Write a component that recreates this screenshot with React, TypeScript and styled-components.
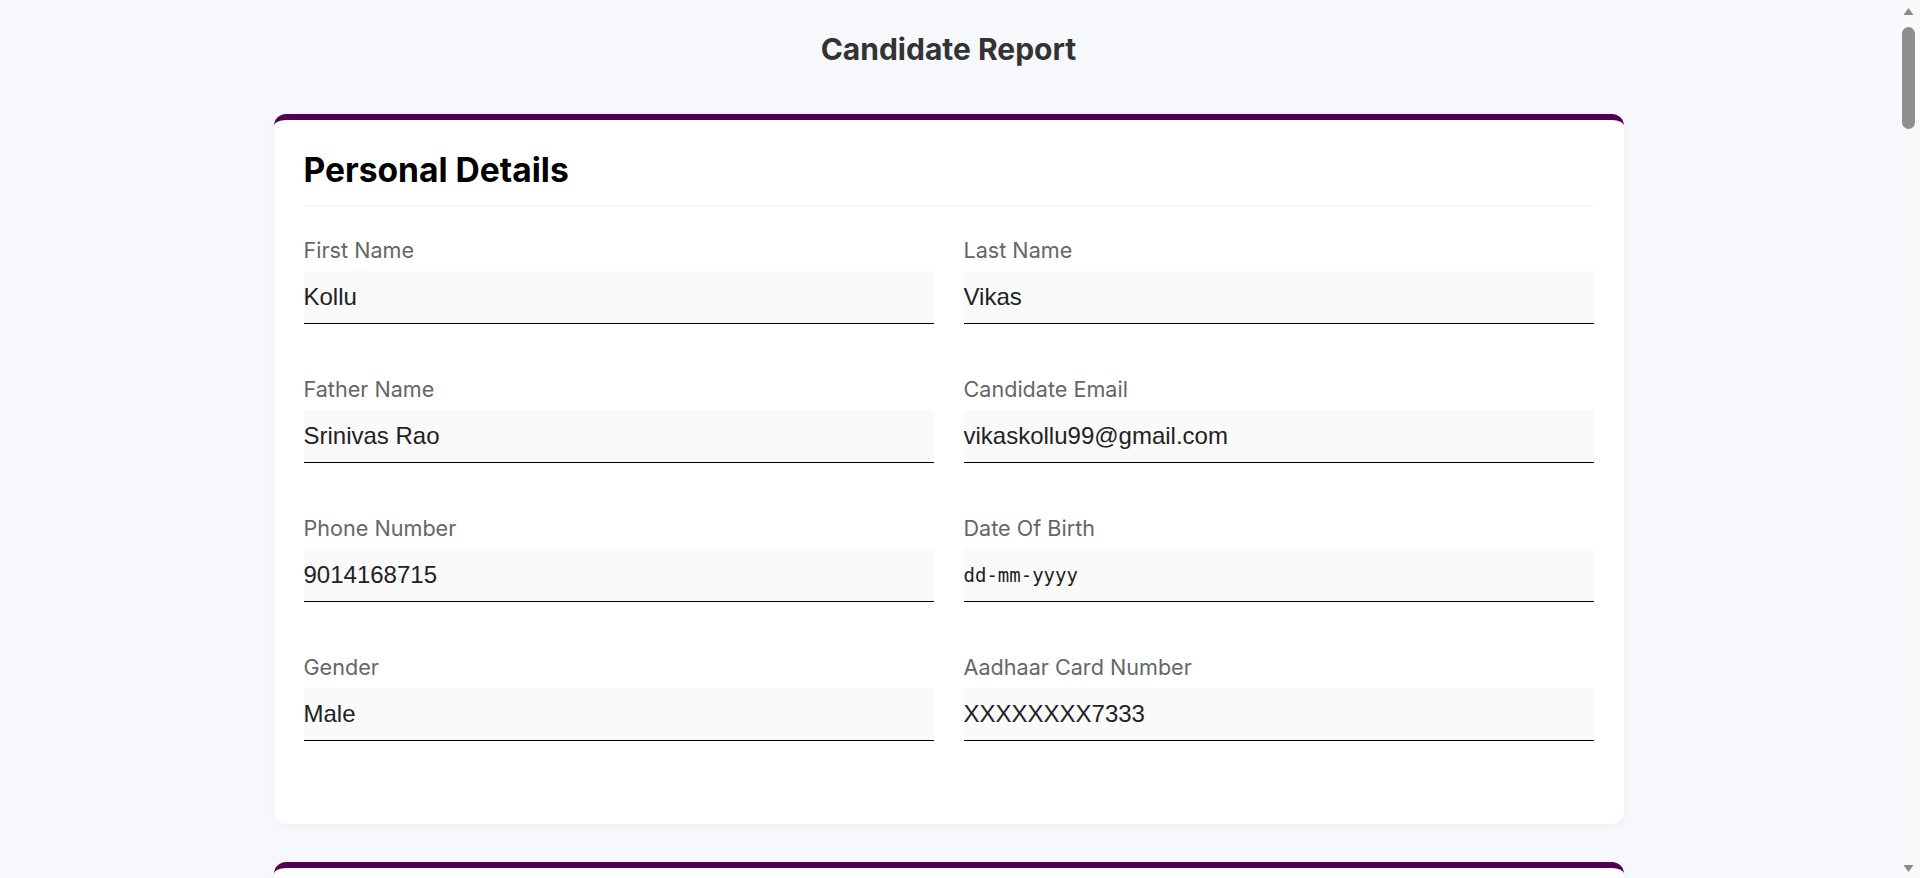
import React from "react";
import styled, { createGlobalStyle } from "styled-components";

const GlobalStyle = createGlobalStyle`
  * { box-sizing: border-box; }
  html, body { margin: 0; padding: 0; }
  body {
    background: #f7f8fc;
    font-family: Inter, "Noto Sans", sans-serif;
    color: #222;
  }
`;

const Page = styled.main`
  margin-right: 23px;
  padding: 31px 0 40px;
`;

const Title = styled.h1`
  margin: 0 0 47px;
  text-align: center;
  font-family: Inter, sans-serif;
  font-size: 30px;
  font-weight: 700;
  line-height: 1.21;
  color: #333;
`;

const Container = styled.div`
  max-width: 1350px;
  margin: 0 auto;
`;

const Card = styled.section`
  background: #fff;
  border-top: 6px solid #520050;
  border-radius: 12px;
  padding: 30px;
  margin-bottom: 38px;
  box-shadow: 0 2px 8px rgba(0, 0, 0, 0.04);
`;

const SectionTitle = styled.h2`
  margin: 0 0 32px;
  padding-bottom: 14px;
  border-bottom: 1px solid #eee;
  font-family: Inter, sans-serif;
  font-size: 33.6px;
  font-weight: 700;
  line-height: 1.21;
  color: #000;
`;

const Grid = styled.div`
  display: grid;
  grid-template-columns: 1fr 1fr;
  column-gap: 30px;
`;

const Field = styled.div`
  display: flex;
  flex-direction: column;
  margin-bottom: 53px;
`;

const Label = styled.label`
  display: block;
  font-family: Inter, sans-serif;
  font-size: 21.6px;
  line-height: 24px;
  color: #666;
  margin-bottom: 9px;
`;

const Value = styled.input<{ $mono?: boolean }>`
  display: block;
  width: 100%;
  margin: 0;
  padding: 12px 0;
  border: none;
  border-bottom: 1px solid #000;
  border-radius: 0;
  outline: none;
  background: #fafafa;
  font-family: ${(p) =>
    p.$mono ? '"DejaVu Sans Mono", monospace' : '"Liberation Sans", Arial, sans-serif'};
  font-size: ${(p) => (p.$mono ? "19px" : "24px")};
  line-height: 28px;
  height: 53px;
  color: #222;
`;

const ScrollTrack = styled.aside`
  position: fixed;
  top: 0;
  right: 0;
  bottom: 0;
  width: 23px;
  background: #fafafa;
  display: flex;
  flex-direction: column;
  align-items: center;
  padding: 7px 0 5px;
`;

const Thumb = styled.div`
  margin-top: 10px;
  width: 13px;
  height: 102px;
  border-radius: 7px;
  background: #8f8f8f;
`;

const ArrowBox = styled.svg<{ $down?: boolean }>`
  display: block;
  flex: none;
  margin-top: ${(p) => (p.$down ? "auto" : "0")};
`;

function Arrow({ down }: { down?: boolean }) {
  return (
    <ArrowBox $down={down} width="13" height="10" viewBox="0 0 13 10">
      <polygon
        points={down ? "1.5,2 11.5,2 6.5,9" : "1.5,8 11.5,8 6.5,1"}
        fill="#8a8a8a"
      />
    </ArrowBox>
  );
}

type FieldDef = { label: string; value: string; mono?: boolean };

const personal: FieldDef[] = [
  { label: "First Name", value: "Kollu" },
  { label: "Last Name", value: "Vikas" },
  { label: "Father Name", value: "Srinivas Rao" },
  { label: "Candidate Email", value: "vikaskollu99@gmail.com" },
  { label: "Phone Number", value: "9014168715" },
  { label: "Date Of Birth", value: "dd-mm-yyyy", mono: true },
  { label: "Gender", value: "Male" },
  { label: "Aadhaar Card Number", value: "XXXXXXXX7333" },
];

const education: FieldDef[] = [
  { label: "Highest Qualification", value: "B.Tech" },
  { label: "Specialization", value: "Computer Science" },
  { label: "College Name", value: "" },
  { label: "Year Of Passing", value: "" },
];

function Section({ title, fields }: { title: string; fields: FieldDef[] }) {
  return (
    <Card>
      <SectionTitle>{title}</SectionTitle>
      <Grid>
        {fields.map((f) => (
          <Field key={f.label}>
            <Label>{f.label}</Label>
            <Value readOnly value={f.value} $mono={f.mono} />
          </Field>
        ))}
      </Grid>
    </Card>
  );
}

export default function App() {
  return (
    <>
      <GlobalStyle />
      <Page>
        <Title>Candidate Report</Title>
        <Container>
          <Section title="Personal Details" fields={personal} />
          <Section title="Education Details" fields={education} />
        </Container>
      </Page>
      <ScrollTrack aria-hidden="true">
        <Arrow />
        <Thumb />
        <Arrow down />
      </ScrollTrack>
    </>
  );
}
